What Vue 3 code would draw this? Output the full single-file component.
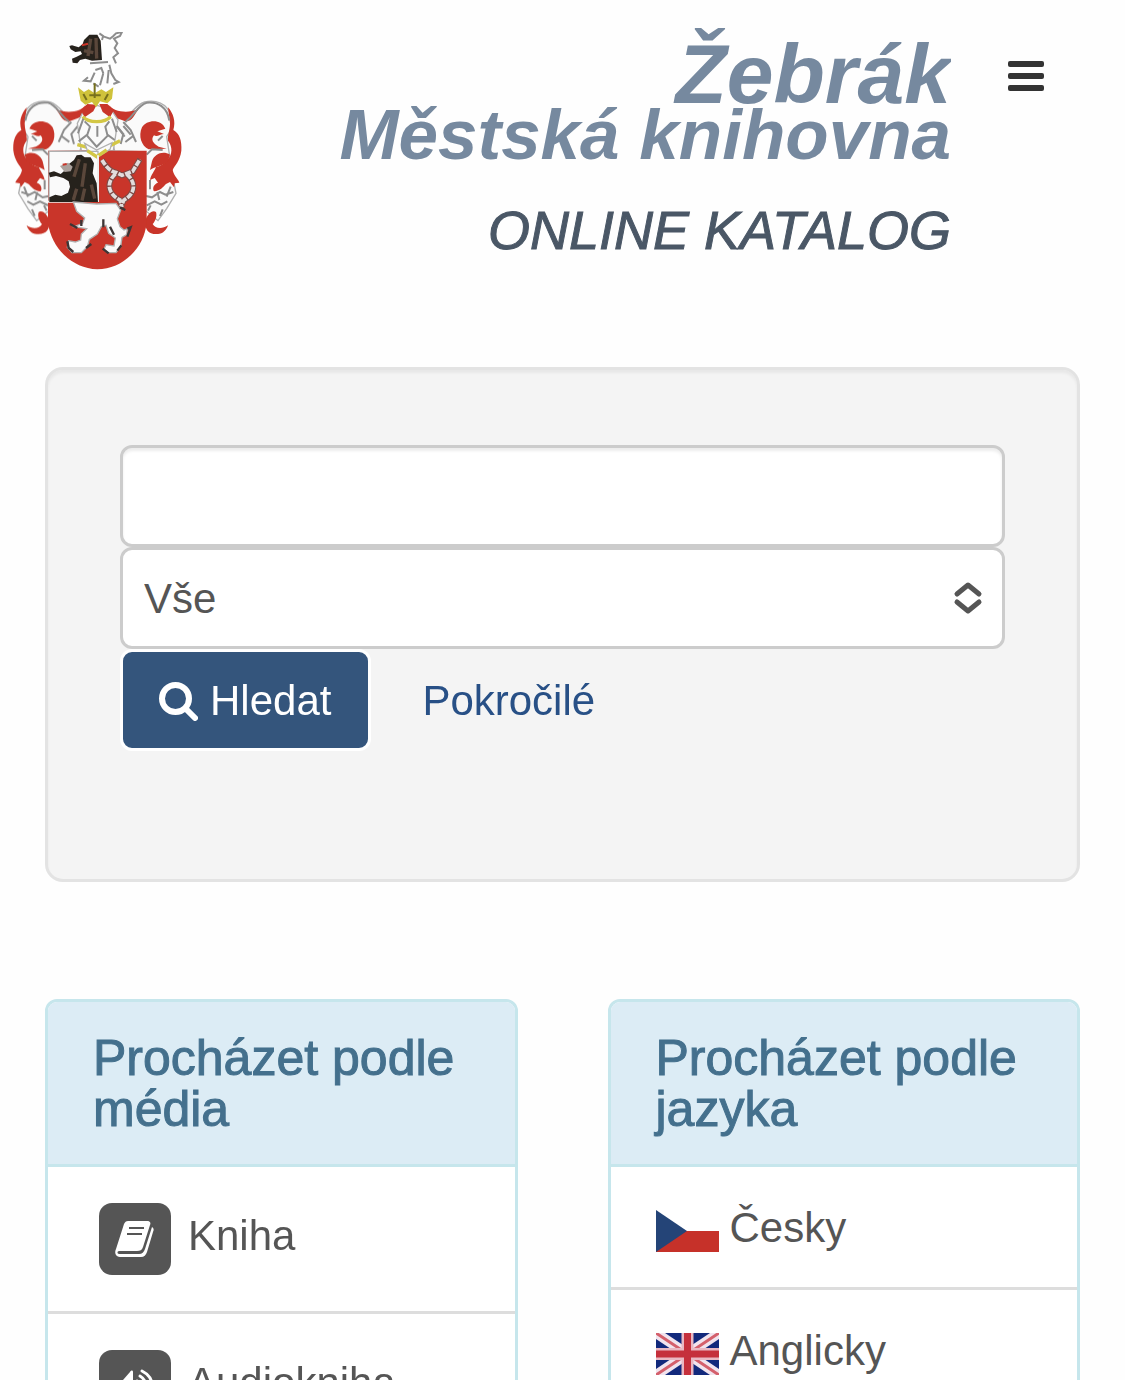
<script setup>
import { ref } from 'vue'

const query = ref('')
const field = ref('all')
const media = [
  { id: 'book', label: 'Kniha' },
  { id: 'audio', label: 'Audiokniha' },
]
const languages = [
  { id: 'cz', label: 'Česky' },
  { id: 'en', label: 'Anglicky' },
]
</script>

<template>
  <div class="page">
    <header class="masthead">
      <svg class="crest" viewBox="30 24 522 732" aria-hidden="true">
        <defs>
          <filter id="soften" x="0" y="0" width="1" height="1">
            <feGaussianBlur stdDeviation="2" />
          </filter>
          <g id="mantle">
            <path class="cloth" d="M246 272L205 290C185 276 178 256 150 246C118 238 82 250 72 286L66 322L84 350L64 480L56 520L84 566L110 602L150 570L150 396L240 392L262 320Z" />
            <path class="red" d="M256 256C244 274 205 282 168 268C184 286 184 304 208 304L246 290ZM80 262C64 280 56 305 64 330C46 340 38 362 40 392C44 424 60 436 66 450C62 470 48 478 46 488L60 490L62 502L74 486L86 492C94 500 102 512 122 514C128 504 122 492 110 488L120 474L134 480C132 464 120 454 116 440C104 440 92 432 82 420C66 402 66 380 80 362C82 346 74 330 74 310Z" />
            <path class="red" d="M88 326C100 296 144 298 158 322C170 348 160 378 138 388L84 386L108 380C126 370 132 358 122 346C112 352 104 342 92 342L112 334Z" />
            <path class="red" d="M74 404C94 392 120 400 128 424L134 450C118 438 100 442 80 424ZM116 576C128 568 144 586 148 602C150 630 138 644 110 642C96 642 84 630 80 616C98 628 118 626 126 612C118 604 112 588 116 576Z" />
            <path class="line" d="M76 302C82 262 110 244 144 248C172 256 176 282 208 306M214 306L192 330L176 366M240 310L214 342L222 372M182 346L208 366M96 348L110 362M144 404L128 388L96 390M64 516L88 524L104 516L128 532L146 528M82 544L100 554L120 544L144 556M96 568L104 588M72 500L84 530M112 516L106 540M134 480V508M132 556L140 572" />
          </g>
        </defs>
        <g filter="url(#soften)">
          <use href="#mantle" />
          <use href="#mantle" transform="translate(584 0) scale(-1 1)" />

          <path class="bear" d="M208 78L216 76L236 82L248 72L252 60L268 44L292 44L302 62L306 120L276 122L256 116L240 120L232 130L218 128L216 116L230 110L246 102L242 94L226 96L212 88Z" />
          <path class="fur" d="M272 56L264 108M288 54L290 116M252 92L280 98" />
          <path class="red-line" d="M246 76L264 71" />
          <path class="line" d="M298 40L312 50L330 56L340 48L348 40L366 36L360 48L342 56L352 70L344 84L354 100L340 112L348 130M310 46L306 60M270 130L324 126M328 134L334 160L346 180L356 186L340 192M286 150L304 144L310 160M284 158L272 184L252 182L264 172M310 160L300 196M326 150L322 190M280 190L296 200" />

          <path class="cloth" d="M252 270L292 256L334 270L354 300L340 392H244L232 310Z" />
          <path class="red" d="M242 270L262 252L290 254L280 274L254 292ZM298 252L322 252L342 270L330 292L308 276Z" />
          <path class="gold" d="M234 202L252 216L266 208L284 220L304 208L318 216L340 202L336 236L322 250L300 244L288 262L276 246L256 254L242 242Z" />
          <path class="ochre" d="M250 222L260 240M284 190V234M324 222L314 240M268 226H302" />
          <path class="gold-line" d="M248 290C266 310 314 310 332 290M232 374L262 382L290 400L324 380L360 362" />
          <path class="line" d="M254 304L270 320L262 344L236 364M328 304L316 320L322 344L344 360M292 318V350M262 348L290 380L324 346M250 296L234 340M336 296L350 336M350 318L374 350M370 318L392 344" />

          <path class="red" d="M144 392H440V608C432 684 370 746 292 748C214 744 154 684 144 608Z" />
          <path class="cloth" d="M147 394H294V544H147ZM254 370L290 390L336 368L330 388L292 412L264 396Z" />
          <path class="gold-line" d="M262 392L290 410L320 390" />
          <path class="divider" d="M144 545H220M294 406V546" />
          <path class="bear" d="M146 458L162 454L182 462L196 450L204 434L222 420L230 406L244 404L254 412L272 412L282 430L278 460L290 490L294 546H148V532L166 524L184 528L204 518L210 500L206 484L190 474L168 468L150 472Z" />
          <path class="fur" d="M238 418L222 470M256 430L246 500M274 494L284 536M254 506L246 542M230 506L220 540" />
          <path class="snout" d="M180 438L204 428L218 440L212 454L194 456Z" />
          <path class="red-line" d="M188 434L200 432" />

          <path class="chain-edge" d="M306 420C318 440 332 456 350 458L366 466L398 454L420 418M346 462C314 492 328 524 360 540L366 564M380 462C412 490 404 522 372 540L362 562" />
          <path class="chain" d="M306 420C318 440 332 456 350 458L366 466L398 454L420 418M346 462C314 492 328 524 360 540L366 562M380 462C412 490 404 522 372 540L362 560" />

          <path class="cloth" d="M220 546L290 552L348 550L362 570L352 596L360 620L372 630L382 626L380 644L366 652L362 680L348 698L324 698L312 688L318 674L342 678L346 654L326 640L318 616L304 620L292 642L268 658L262 680L244 698L216 698L202 682L206 662L226 666L242 660L244 642L260 626L222 620L248 610L254 594L230 574Z" />
          <path class="dark-line" d="M210 612L232 624M244 600V618M310 598V622M330 620L342 644M382 626L392 622L382 650M202 664L206 684L220 696M258 684L274 672M308 686L326 700M352 692L364 676M360 562L376 570" />
        </g>
      </svg>

      <h1 class="brand">
        <span class="town">Žebrák</span>
        <span class="library">Městská knihovna</span>
        <span class="catalog">ONLINE KATALOG</span>
      </h1>

      <button class="menu" type="button" aria-label="Menu">
        <span class="bar"></span>
        <span class="bar"></span>
        <span class="bar"></span>
      </button>
    </header>

    <form class="search" @submit.prevent>
      <input v-model="query" class="control" type="text" aria-label="Hledaný výraz" />
      <div class="select-wrap">
        <select v-model="field" class="control" aria-label="Hledat v poli">
          <option value="all">Vše</option>
        </select>
        <svg class="chevrons" viewBox="0 0 30 34" aria-hidden="true">
          <path d="M4 13L15 4L26 13M4 21L15 30L26 21" />
        </svg>
      </div>
      <div class="actions">
        <button class="submit" type="submit">
          <svg class="glass" viewBox="0 0 39 39" aria-hidden="true">
            <circle cx="16.5" cy="16.5" r="13.5" />
            <path d="M27 27L36 36" />
          </svg>
          <span>Hledat</span>
        </button>
        <a class="advanced" href="#">Pokročilé</a>
      </div>
    </form>

    <main class="panels">
      <section class="panel">
        <h2>Procházet podle média</h2>
        <a v-for="m in media" :key="m.id" class="row media-row" href="#">
          <span class="tile">
            <svg v-if="m.id === 'book'" viewBox="0 0 72 72" aria-hidden="true">
              <path class="fill" d="M29 18H48C51 18 52 20 51 22L44 44C43 47 41 48 38 48H20C18 48 18 51 20 51H40C43 51 45 49 46 46L53 24C55 25 55 27 54 29L48 49C47 52 45 54 42 54H21C17 54 15 50 17 46L25 21C26 19 27 18 29 18Z" />
              <path class="cut" d="M30 25H45M28 31H43" />
            </svg>
            <svg v-else viewBox="0 0 72 72" aria-hidden="true">
              <path class="fill" d="M34 22V52L25 44H17V30H24L31 22C32 20 34 20 34 22Z" />
              <path class="wave" d="M38 31C42 34 42 40 38 43M41 26C49 31 49 43 41 48M43 21C57 28 57 46 43 53" />
            </svg>
          </span>
          <span class="media-label">{{ m.label }}</span>
        </a>
      </section>

      <section class="panel">
        <h2>Procházet podle jazyka</h2>
        <a v-for="l in languages" :key="l.id" class="row lang-row" href="#">
          <svg v-if="l.id === 'cz'" class="flag" viewBox="0 0 63 42" aria-hidden="true">
            <path fill="#fff" d="M0 0H63V21H0Z" />
            <path fill="#c63129" d="M0 21H63V42H0Z" />
            <path fill="#244477" d="M0 0L31 21L0 42Z" />
          </svg>
          <svg v-else class="flag" viewBox="0 0 63 42" aria-hidden="true">
            <path fill="#12297c" d="M0 0H63V42H0Z" />
            <path stroke="#f1e4ee" stroke-width="10" d="M0 0L63 42M63 0L0 42" />
            <path stroke="#d4606c" stroke-width="3" d="M0 0L63 42M63 0L0 42" />
            <path stroke="#e9b8c3" stroke-width="12" d="M31.5 0V42M0 21H63" />
            <path stroke="#c5303c" stroke-width="7" d="M31.5 0V42M0 21H63" />
          </svg>
          <span class="lang-label">{{ l.label }}</span>
        </a>
      </section>
    </main>
  </div>
</template>

<style>
body {
  margin: 0;
  background: #fefefe;
}
</style>

<style scoped>
.page {
  box-sizing: border-box;
  height: 100vh;
  overflow: hidden;
  font-family: "Liberation Sans", Arial, sans-serif;
  font-size: 42px;
  color: #555;
}

.masthead {
  display: flex;
  align-items: flex-start;
  padding: 28px 72px 0 10px;
}

.crest {
  flex: none;
  width: 174px;
  height: 244px;
}

.red { fill: #c93629; }
.gold { fill: #cfc23a; }
.bear { fill: #28211d; }
.cloth { fill: #fafafa; stroke: #b0b0b0; stroke-width: 4; }
.snout { fill: #aaa19c; }
.line { fill: none; stroke: #8d8d8d; stroke-width: 6; }
.dark-line { fill: none; stroke: #3d3434; stroke-width: 7; }
.red-line { fill: none; stroke: #c93629; stroke-width: 6; }
.gold-line { fill: none; stroke: #d3c744; stroke-width: 10; }
.ochre { fill: none; stroke: #77701f; stroke-width: 6; }
.fur { fill: none; stroke: #5a473a; stroke-width: 10; }
.divider { fill: none; stroke: #eee; stroke-width: 6; }
.chain-edge { fill: none; stroke: #7e4a46; stroke-width: 17; }
.chain { fill: none; stroke: #e2dcdc; stroke-width: 11; stroke-dasharray: 18 4; }

.brand {
  flex: 1;
  display: flex;
  flex-direction: column;
  margin: 0;
  padding: 16px 0 0;
  overflow: hidden;
  text-align: right;
  white-space: nowrap;
  font-style: italic;
  color: #76899f;
}

.town {
  font-size: 84px;
  line-height: 60px;
}

.library {
  font-size: 71px;
  line-height: 62px;
}

.catalog {
  margin-top: 34px;
  font-size: 54px;
  line-height: 60px;
  font-weight: 400;
  color: #4a5766;
  -webkit-text-stroke: 1px currentColor;
}

.menu {
  display: flex;
  flex-direction: column;
  gap: 6px;
  margin: 24px 0 0 48px;
  padding: 9px;
  border: 0;
  background: none;
}

.bar {
  width: 36px;
  height: 6px;
  border-radius: 2px;
  background: #333;
}

.search {
  margin: 95px 45px 0;
  padding: 75px 72px 128px;
  border: 3px solid #e3e3e3;
  border-radius: 18px;
  background: #f4f4f4;
  box-shadow: inset 0 3px 3px rgba(0, 0, 0, 0.05);
}

.control {
  display: block;
  box-sizing: border-box;
  width: 100%;
  height: 102px;
  margin: 0;
  padding: 0 21px;
  border: 3px solid #ccc;
  border-radius: 12px;
  outline: 0;
  appearance: none;
  background: #fff;
  color: #555;
  font: inherit;
}

input.control {
  box-shadow: inset 0 3px 3px rgba(0, 0, 0, 0.075);
}

.select-wrap {
  position: relative;
}

.chevrons {
  position: absolute;
  top: 34px;
  right: 22px;
  width: 30px;
  height: 34px;
  fill: none;
  stroke: #555;
  stroke-width: 5;
  stroke-linecap: round;
  stroke-linejoin: round;
  pointer-events: none;
}

.actions {
  display: flex;
  align-items: center;
}

.submit {
  display: flex;
  align-items: center;
  gap: 12px;
  box-sizing: border-box;
  height: 102px;
  padding: 2px 37px 0 36px;
  border: 3px solid #fff;
  border-radius: 12px;
  background: #34557c;
  color: #fff;
  font: inherit;
}

.glass {
  width: 39px;
  height: 39px;
  fill: none;
  stroke: #fff;
  stroke-width: 6;
  stroke-linecap: round;
}

.advanced {
  margin-left: 51px;
  padding-top: 2px;
  color: #285086;
  text-decoration: none;
}

.panels {
  display: grid;
  grid-template-columns: 1fr 1fr;
  gap: 90px;
  margin: 117px 45px 0;
}

.panel {
  border: 3px solid #c6e6ec;
  border-radius: 12px;
  overflow: hidden;
  background: #fff;
}

.panel h2 {
  margin: 0;
  padding: 31px 45px 29px;
  border-bottom: 3px solid #c6e6ec;
  background: #dcecf5;
  color: #44708d;
  font-size: 50px;
  line-height: 51px;
  font-weight: 400;
  -webkit-text-stroke: 1px currentColor;
}

.row {
  display: flex;
  align-items: center;
  color: #555;
  text-decoration: none;
}

.row + .row {
  border-top: 3px solid #ddd;
}

.media-row {
  gap: 17px;
  height: 144px;
  padding: 0 51px;
}

.media-label {
  padding-bottom: 7px;
}

.tile {
  width: 72px;
  height: 72px;
  border-radius: 13px;
  background: #555;
}

.tile svg {
  display: block;
}

.fill { fill: #fff; }
.cut { stroke: #555; stroke-width: 2; }
.wave { fill: none; stroke: #fff; stroke-width: 3; stroke-linecap: round; }

.lang-row {
  gap: 11px;
  height: 120px;
  padding: 0 45px;
}

.lang-label {
  padding-top: 2px;
}

.flag {
  width: 63px;
  height: 42px;
  margin-top: 8px;
}
</style>
